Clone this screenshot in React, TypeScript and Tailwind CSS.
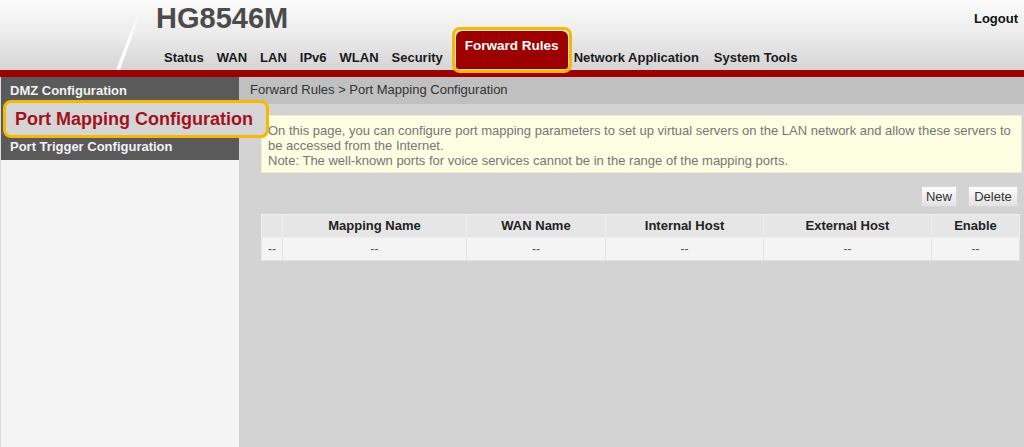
const navItems = ["Status", "WAN", "LAN", "IPv6", "WLAN", "Security"];

const columns = [
  { label: "", width: "w-[21px]" },
  { label: "Mapping Name", width: "w-[184px]" },
  { label: "WAN Name", width: "w-[139px]" },
  { label: "Internal Host", width: "w-[158px]" },
  { label: "External Host", width: "w-[168px]" },
  { label: "Enable", width: "w-[88px]" },
];

function Header() {
  return (
    <div className="relative h-[70px] bg-gradient-to-b from-[#fbfbfb] via-[#ececec] to-[#d4d4d4]">
      <svg className="absolute left-0 top-0" width="200" height="70" viewBox="0 0 200 70">
        <defs>
          <linearGradient id="slash" x1="0" y1="0" x2="0" y2="1">
            <stop offset="0" stopColor="#ffffff" stopOpacity="0" />
            <stop offset="0.5" stopColor="#ffffff" stopOpacity="1" />
            <stop offset="1" stopColor="#ffffff" stopOpacity="0.9" />
          </linearGradient>
        </defs>
        <polygon points="140,8 142,8 120,70 116,70" fill="url(#slash)" />
      </svg>
      <div className="relative flex h-[26px] items-start justify-between">
        <div className="ml-[156px] text-[29px] font-bold leading-[37px] text-[#4b4b4b]">HG8546M</div>
        <div className="mr-[6px] mt-[11px] text-[13px] font-bold leading-[16px] text-[#111]">Logout</div>
      </div>
      <div className="relative flex h-[44px] items-end gap-[13px] pl-[164px]">
        {navItems.map((n) => (
          <span key={n} className="mb-[4px] text-[13px] font-bold leading-[16px] text-[#1a1a1a]">
            {n}
          </span>
        ))}
        <div className="relative z-10 -mb-[3px] ml-[-4px] mr-[-11px] rounded-[8px] border-[3px] border-[#f6b900] p-[1px]">
          <div className="h-[38px] rounded-t-[6px] rounded-b-[3px] bg-[#9d0000] px-[9px] pt-[7px] text-[13.5px] font-bold leading-[16px] text-white">
            Forward Rules
          </div>
        </div>
        <span className="mb-[4px] text-[13px] font-bold leading-[16px] text-[#1a1a1a]">Network Application</span>
        <span className="mb-[4px] ml-[2px] text-[13px] font-bold leading-[16px] text-[#1a1a1a]">System Tools</span>
      </div>
    </div>
  );
}

function Sidebar() {
  return (
    <aside className="flex w-[239px] shrink-0 flex-col border-l border-[#dcdcdc] bg-[#f4f4f4]">
      <div className="bg-[#5a5a5a] pb-[1px]">
        <div className="h-[23px] pl-[9px] pt-[6px] text-[13px] font-bold leading-[16px] text-[#f2f2f2]">
          DMZ Configuration
        </div>
        <div className="relative z-10 ml-[2px] flex h-[38px] w-[266px] items-center rounded-[8px] border-[3px] border-[#f6b900] bg-[#d5d5d5] pl-[9px]">
          <span className="text-[18px] font-bold leading-[22px] text-[#a3121c]">Port Mapping Configuration</span>
        </div>
        <div className="h-[21px] pl-[9px] pt-[1px] text-[13px] font-bold leading-[16px] text-[#f2f2f2]">
          Port Trigger Configuration
        </div>
      </div>
    </aside>
  );
}

function Main() {
  return (
    <main className="flex-1 bg-[#d3d3d3]">
      <div className="h-[27px] bg-[#c0c0c0] pl-[11px] pt-[5px] text-[13px] leading-[16px] text-[#333]">
        Forward Rules &gt; Port Mapping Configuration
      </div>
      <div className="ml-[22px] mr-[2px] mt-[11px] h-[58px] border border-[#ecead0] bg-[#fefee2] pl-[6px] pt-[7px] text-[13px] leading-[15px] text-[#767676]">
        <div className="whitespace-nowrap">
          On this page, you can configure port mapping parameters to set up virtual servers on the LAN network and allow these servers to
        </div>
        <div>be accessed from the Internet.</div>
        <div>Note: The well-known ports for voice services cannot be in the range of the mapping ports.</div>
      </div>
      <div className="mr-[6px] mt-[13px] flex justify-end gap-[11px]">
        <button className="h-[21px] w-[36px] border border-[#d6d6d6] bg-gradient-to-b from-[#fdfdfd] to-[#e2e2e2] text-[13px] leading-[16px] text-[#333]">
          New
        </button>
        <button className="h-[21px] w-[50px] border border-[#d6d6d6] bg-gradient-to-b from-[#fdfdfd] to-[#e2e2e2] text-[13px] leading-[16px] text-[#333]">
          Delete
        </button>
      </div>
      <table className="ml-[22px] mt-[7px] w-[758px] table-fixed border-collapse">
        <thead>
          <tr className="h-[23px] bg-[#e6e6e6]">
            {columns.map((c, i) => (
              <th key={i} className={`${c.width} border border-[#eeeeee] text-center text-[13px] font-bold leading-[16px] text-[#222]`}>
                {c.label}
              </th>
            ))}
          </tr>
        </thead>
        <tbody>
          <tr className="h-[23px] bg-[#f4f4f4]">
            {columns.map((c, i) => (
              <td key={i} className="border border-[#e3e3e3] text-center text-[12px] leading-[15px] text-[#555]">
                --
              </td>
            ))}
          </tr>
        </tbody>
      </table>
    </main>
  );
}

export default function App() {
  return (
    <div className="flex h-[447px] w-[1024px] flex-col overflow-hidden bg-[#d3d3d3] font-['Liberation_Sans',Arial,sans-serif]">
      <Header />
      <div className="h-[7px] bg-[#9c0000]" />
      <div className="flex flex-1">
        <Sidebar />
        <Main />
      </div>
    </div>
  );
}
